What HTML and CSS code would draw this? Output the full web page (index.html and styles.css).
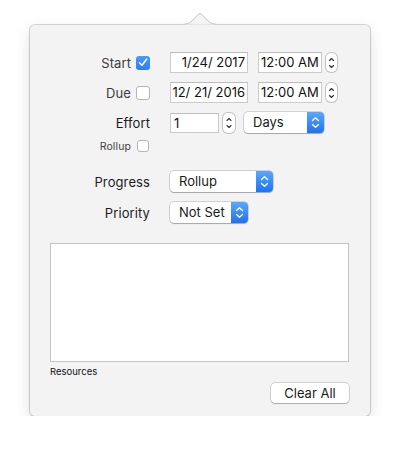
FILE: index.html
```
<!DOCTYPE html>
<html>
<head>
<meta charset="utf-8">
<link rel="stylesheet" href="styles.css">
</head>
<body>
<div class="popover">
  <svg class="arrow" width="34" height="13" viewBox="0 0 34 13">
    <path d="M0,11.5 Q6,11.5 9,8 L15.3,1.3 Q17,-0.4 18.7,1.3 L25,8 Q28,11.5 34,11.5" fill="#f3f3f3" stroke="#c6c6c6" stroke-width="1"/>
    <rect x="0" y="11.8" width="34" height="1.2" fill="#f3f3f3"/>
  </svg>

  <div class="row">
    <div class="label-cell"><span class="lbl dim">Start</span><span class="check on"><svg width="10" height="9" viewBox="0 0 10 9"><path d="M1.5,4.8 L4,7.3 L8.6,1.2" fill="none" stroke="#fff" stroke-width="1.5" stroke-linecap="round" stroke-linejoin="round"/></svg></span></div>
    <div class="field date">1/24/ 2017</div>
    <div class="field time">12:00 AM</div>
    <div class="stepper"><svg width="11" height="20" viewBox="0 0 11 20"><path d="M3.5,7.5 L5.5,5.5 L7.5,7.5 M3.5,12.5 L5.5,14.5 L7.5,12.5" fill="none" stroke="#333" stroke-width="1.1" stroke-linecap="round" stroke-linejoin="round"/></svg></div>
  </div>

  <div class="row">
    <div class="label-cell"><span class="lbl dim">Due</span><span class="check"></span></div>
    <div class="field date">12/ 21/ 2016</div>
    <div class="field time">12:00 AM</div>
    <div class="stepper"><svg width="11" height="20" viewBox="0 0 11 20"><path d="M3.5,7.5 L5.5,5.5 L7.5,7.5 M3.5,12.5 L5.5,14.5 L7.5,12.5" fill="none" stroke="#333" stroke-width="1.1" stroke-linecap="round" stroke-linejoin="round"/></svg></div>
  </div>

  <div class="row">
    <div class="label-cell"><span class="lbl">Effort</span></div>
    <div class="field effort">1</div>
    <div class="stepper s2"><svg width="12" height="20" viewBox="0 0 12 20"><path d="M4,7.5 L6,5.5 L8,7.5 M4,12.5 L6,14.5 L8,12.5" fill="none" stroke="#333" stroke-width="1.1" stroke-linecap="round" stroke-linejoin="round"/></svg></div>
    <div class="popup days"><span class="ptext">Days</span><span class="pblue"><svg width="17" height="21" viewBox="0 0 17 21"><path d="M5.5,8.5 L8.5,5.8 L11.5,8.5 M5.5,12.5 L8.5,15.2 L11.5,12.5" fill="none" stroke="#fff" stroke-width="1.3" stroke-linecap="round" stroke-linejoin="round"/></svg></span></div>
  </div>

  <div class="row small">
    <div class="label-cell"><span class="lbl tiny">Rollup</span><span class="check sm"></span></div>
  </div>

  <div class="row progress">
    <div class="label-cell"><span class="lbl">Progress</span></div>
    <div class="popup prog"><span class="ptext">Rollup</span><span class="pblue"><svg width="17" height="21" viewBox="0 0 17 21"><path d="M5.5,8.5 L8.5,5.8 L11.5,8.5 M5.5,12.5 L8.5,15.2 L11.5,12.5" fill="none" stroke="#fff" stroke-width="1.3" stroke-linecap="round" stroke-linejoin="round"/></svg></span></div>
  </div>

  <div class="row priority">
    <div class="label-cell"><span class="lbl">Priority</span></div>
    <div class="popup prio"><span class="ptext">Not Set</span><span class="pblue"><svg width="17" height="21" viewBox="0 0 17 21"><path d="M5.5,8.5 L8.5,5.8 L11.5,8.5 M5.5,12.5 L8.5,15.2 L11.5,12.5" fill="none" stroke="#fff" stroke-width="1.3" stroke-linecap="round" stroke-linejoin="round"/></svg></span></div>
  </div>

  <div class="resources"></div>
  <div class="res-label">Resources</div>
  <div class="footer"><div class="button">Clear All</div></div>
</div>
</body>
</html>
```
FILE: styles.css
```
html, body {
  margin: 0;
  padding: 0;
  background: #ffffff;
}
body {
  font-family: Inter, "Liberation Sans", sans-serif;
  font-size: 13px;
  color: #1a1a1a;
}
.popover {
  position: relative;
  margin: 25px 0 0 30px;
  width: 340px;
  height: 391px;
  box-sizing: border-box;
  background: #f3f3f3;
  border-radius: 5px;
  box-shadow: 0 0 0 1px rgba(0,0,0,0.16), 0 5px 14px rgba(0,0,0,0.14);
  padding-top: 27px;
}
.arrow {
  position: absolute;
  left: 153px;
  top: -12px;
}
.row {
  display: flex;
  align-items: center;
  height: 21px;
  margin-bottom: 9px;
}
.label-cell {
  width: 120px;
  display: flex;
  justify-content: flex-end;
  align-items: center;
  gap: 5px;
  margin-right: 20px;
}
.lbl {
  color: #1c1c1c;
  letter-spacing: 0.1px;
}
.lbl.dim {
  color: #3d3d3d;
}
.lbl.tiny {
  font-size: 10.5px;
  color: #444;
}
.check {
  width: 14px;
  height: 14px;
  box-sizing: border-box;
  border: 1px solid #b4b4b4;
  border-radius: 3px;
  background: #fff;
  display: flex;
  align-items: center;
  justify-content: center;
}
.check.on {
  border: none;
  background: linear-gradient(#4a9cfa, #2a7ef4);
}
.check.sm {
  width: 12px;
  height: 12px;
  margin-right: 1px;
  margin-left: 1px;
}
.row.small {
  height: 12px;
  margin-top: -2px;
  margin-bottom: 19px;
}
.field {
  height: 21px;
  box-sizing: border-box;
  background: #fff;
  border: 1px solid #cbcbcb;
  border-top-color: #bdbdbd;
  line-height: 19px;
  color: #111;
}
.field.date {
  width: 78px;
  text-align: right;
  padding-right: 2px;
}
.field.time {
  width: 64px;
  margin-left: 10px;
  padding-left: 2px;
}
.field.effort {
  width: 49px;
  height: 20px;
  line-height: 18px;
  padding-left: 3px;
}
.stepper {
  width: 11px;
  height: 19px;
  box-sizing: border-box;
  margin-left: 4px;
  background: #fff;
  border-radius: 5px;
  box-shadow: 0 0 0 1px #c2c2c2;
  display: flex;
  align-items: center;
  justify-content: center;
  overflow: hidden;
}
.stepper svg {
  display: block;
  flex: none;
}
.stepper.s2 {
  width: 12px;
  height: 20px;
}
.popup {
  height: 21px;
  display: flex;
  align-items: stretch;
  border-radius: 4px;
  background: #fff;
  box-shadow: 0 0 0 0.5px rgba(0,0,0,0.28), 0 1px 1px rgba(0,0,0,0.2);
  overflow: hidden;
}
.ptext {
  flex: 1;
  padding-left: 9px;
  line-height: 21px;
  color: #1a1a1a;
}
.pblue {
  width: 17px;
  background: linear-gradient(#5aa8fd, #1e72f3);
  display: flex;
  align-items: center;
  justify-content: center;
}
.pblue svg {
  display: block;
}
.popup.days {
  width: 80px;
  margin-left: 9px;
}
.popup.prog {
  width: 103px;
}
.popup.prio {
  width: 78px;
}
.row.progress {
  margin-bottom: 10px;
}
.row.priority {
  margin-bottom: 20px;
}
.resources {
  margin-left: 20px;
  width: 299px;
  height: 119px;
  box-sizing: border-box;
  background: #fff;
  border: 1px solid #c4c4c4;
}
.res-label {
  margin: 4px 0 0 20px;
  font-size: 9.5px;
  color: #111;
  height: 12px;
  line-height: 12px;
}
.footer {
  display: flex;
  justify-content: flex-end;
  margin-right: 21px;
  margin-top: 5px;
}
.button {
  width: 78px;
  height: 20px;
  box-sizing: border-box;
  background: #fff;
  border-radius: 4px;
  box-shadow: 0 0 0 0.5px rgba(0,0,0,0.28), 0 1px 1px rgba(0,0,0,0.18);
  text-align: center;
  line-height: 20px;
  color: #1a1a1a;
}
```
